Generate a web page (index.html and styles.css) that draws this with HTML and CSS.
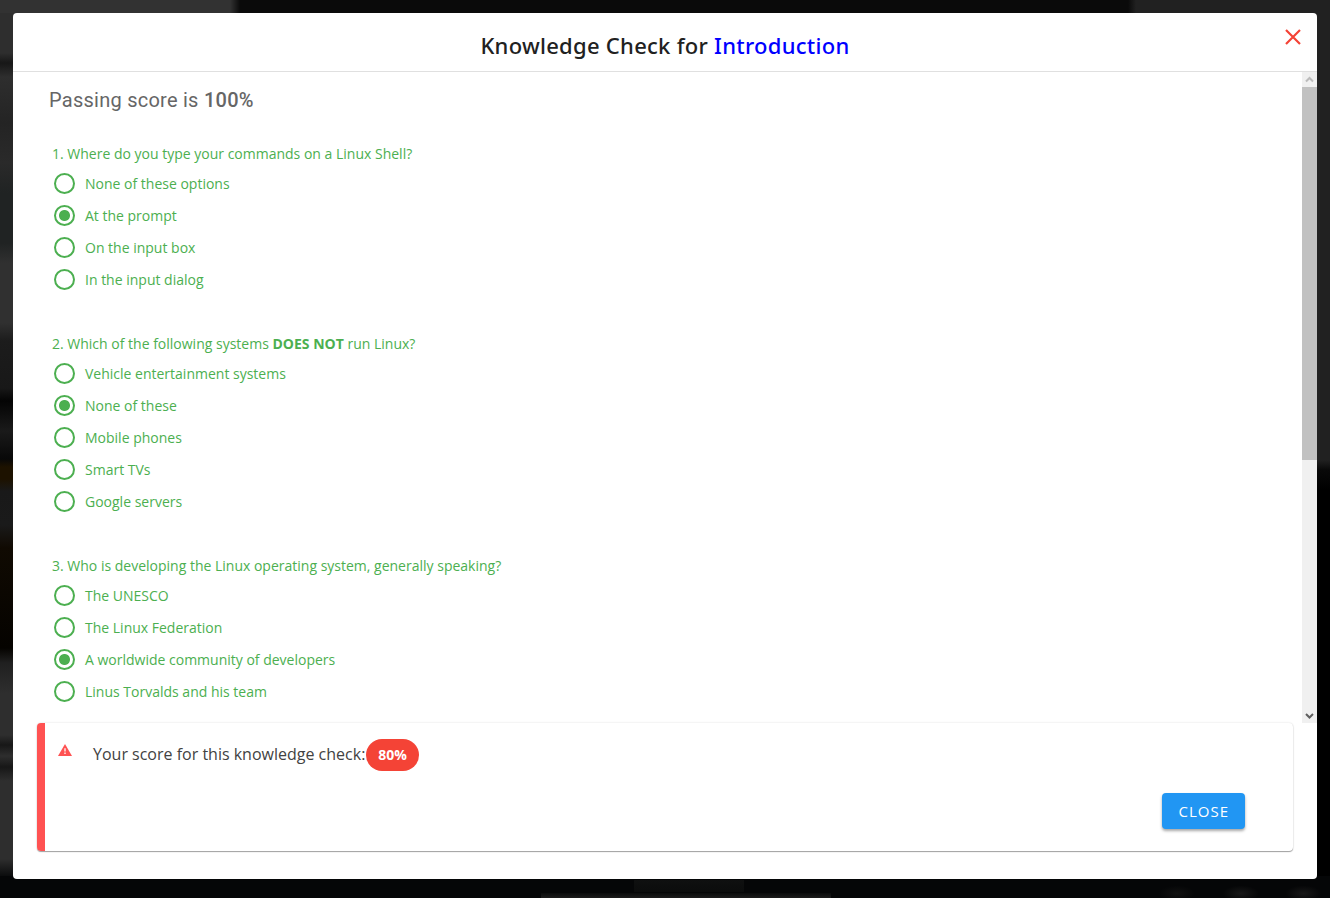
FILE: index.html
```html
<!DOCTYPE html>
<html lang="en">
<head>
<meta charset="utf-8">
<title>Knowledge Check</title>
<link rel="stylesheet" href="styles.css">
</head>
<body>
<main class="dialog" role="dialog" aria-labelledby="dialog-title">
  <header class="dialog-header">
    <h1 class="dialog-title" id="dialog-title">Knowledge Check for <span class="topic">Introduction</span></h1>
    <button class="dismiss" type="button" aria-label="Dismiss">
      <svg viewBox="0 0 16 16" width="16" height="16"><path d="M1 1 15 15M15 1 1 15" fill="none" stroke="currentColor" stroke-width="2.2"/></svg>
    </button>
  </header>
  <div class="dialog-body">
    <form class="quiz">
      <h2 class="passing">Passing score is <strong>100%</strong></h2>
      <fieldset class="question">
        <legend>1. Where do you type your commands on a Linux Shell?</legend>
        <label class="option"><input type="radio" name="q1">None of these options</label>
        <label class="option"><input type="radio" name="q1" checked>At the prompt</label>
        <label class="option"><input type="radio" name="q1">On the input box</label>
        <label class="option"><input type="radio" name="q1">In the input dialog</label>
      </fieldset>
      <fieldset class="question">
        <legend>2. Which of the following systems <b>DOES NOT</b> run Linux?</legend>
        <label class="option"><input type="radio" name="q2">Vehicle entertainment systems</label>
        <label class="option"><input type="radio" name="q2" checked>None of these</label>
        <label class="option"><input type="radio" name="q2">Mobile phones</label>
        <label class="option"><input type="radio" name="q2">Smart TVs</label>
        <label class="option"><input type="radio" name="q2">Google servers</label>
      </fieldset>
      <fieldset class="question">
        <legend>3. Who is developing the Linux operating system, generally speaking?</legend>
        <label class="option"><input type="radio" name="q3">The UNESCO</label>
        <label class="option"><input type="radio" name="q3">The Linux Federation</label>
        <label class="option"><input type="radio" name="q3" checked>A worldwide community of developers</label>
        <label class="option"><input type="radio" name="q3">Linus Torvalds and his team</label>
      </fieldset>
    </form>
    <div class="scrollbar" aria-hidden="true">
      <svg class="arrow arrow-up" viewBox="0 0 15 15"><path d="M4 9.5 7.5 6 11 9.5" fill="none" stroke="currentColor" stroke-width="2"/></svg>
      <div class="track"><div class="thumb"></div></div>
      <svg class="arrow arrow-down" viewBox="0 0 15 15"><path d="M4 6 7.5 9.5 11 6" fill="none" stroke="currentColor" stroke-width="2"/></svg>
    </div>
  </div>
  <section class="result">
    <div class="result-row">
      <svg class="warning" viewBox="0 0 14 12" width="14" height="12"><path d="M7 0 14 12H0Z" fill="currentColor"/><path d="M7 4.2V7.6M7 8.6V10" stroke="#fff" stroke-width="1.3"/></svg>
      <p class="score-text">Your score for this knowledge check:</p>
      <span class="score">80%</span>
    </div>
    <button class="close" type="button">CLOSE</button>
  </section>
</main>
</body>
</html>
```
FILE: styles.css
```css
* { box-sizing: border-box; }

body {
  margin: 0;
  height: 100vh;
  padding: 13px 13px 19px;
  display: flex;
  font-family: "Open Sans", "Noto Sans", sans-serif;
  background:
    linear-gradient(#0a0b0b, #1c1c1c) 52% 100% / 290px 5px no-repeat,
    linear-gradient(#0f1010, #0b0c0c) 52% calc(100% - 6px) / 110px 12px no-repeat,
    radial-gradient(ellipse 18px 8px at 88.5% 99.5%, #111, transparent) no-repeat,
    radial-gradient(ellipse 18px 8px at 93.3% 99.5%, #181818, transparent) no-repeat,
    radial-gradient(ellipse 18px 8px at 98% 99.5%, #181818, transparent) no-repeat,
    linear-gradient(#050607, #050607) 0 100% / 100% 22px no-repeat,
    linear-gradient(#2e2e2e 0, #2e2e2e 40px, #171717 50px, #2e2e2e 64px, #242424 110px, #2a2a2a 150px, #202323 180px, #202323 230px, #303030 250px, #303030 310px, #1c1c1c 328px, #181818 375px, #040404 388px, #1a1a1a 418px, #080808 446px, #1d1200 454px, #1d1200 466px, #191919 478px, #1a1a1a 512px, #100a02 535px, #050300 635px, #202020 650px, #2e2e2e 680px, #2e2e2e 722px, #171717 732px, #2e2e2e 743px, #171717 754px, #2e2e2e 768px, #2e2e2e 846px, #050607 866px) 0 13px / 13px 100% no-repeat,
    linear-gradient(#212121 0, #212121 460px, #090909 470px, #000 490px) 100% 0 / 13px 100% no-repeat,
    linear-gradient(90deg, #323232 0, #323232 230px, #0a0a0a 240px, #0a0a0a 1128px, #212121 1136px);
}

.dialog {
  flex: 1;
  min-width: 0;
  display: flex;
  flex-direction: column;
  background: #fff;
  border-radius: 4px;
  overflow: hidden;
}

.dialog-header {
  display: grid;
  grid-template-columns: 1fr auto 1fr;
  height: 59px;
  padding: 0 16px;
  border-bottom: 1px solid #e0e0e0;
  flex-shrink: 0;
}

.dialog-title {
  grid-column: 2;
  margin: 0;
  padding-top: 16px;
  font-family: "Noto Sans", sans-serif;
  font-size: 22px;
  line-height: 32px;
  font-weight: 500;
  letter-spacing: 0.0125em;
  color: #212121;
}

.topic { color: #00f; }

button {
  border: 0;
  font: inherit;
  cursor: pointer;
}

.dismiss {
  justify-self: end;
  align-self: start;
  margin-top: 16px;
  padding: 0;
  background: none;
  color: #f44336;
}

.dismiss svg { display: block; }

.dialog-body {
  flex: 1;
  min-height: 0;
  display: flex;
}

.quiz {
  flex: 1;
  overflow-y: auto;
  scrollbar-width: none;
  padding: 12px 36px 0;
}

.passing {
  margin: 0 0 24px;
  font: 400 20px/32px Roboto, sans-serif;
  letter-spacing: 0.0125em;
  color: #666;
}

.passing strong { font-weight: 500; }

.question {
  margin: 0 0 34px;
  padding: 0 3px;
  border: 0;
  min-width: 0;
  color: #4caf50;
  font-size: 14px;
}

.question:last-child { margin-bottom: 0; }

.question legend {
  padding: 0;
  line-height: 28px;
}

.option {
  display: flex;
  align-items: center;
  gap: 10px;
  height: 32px;
  padding: 0 0 1px 2px;
}

.option input {
  appearance: none;
  width: 21px;
  height: 21px;
  margin: 0;
  border: 2px solid #4caf50;
  border-radius: 50%;
}

.option input:checked {
  background: radial-gradient(circle, #4caf50 5px, transparent 6px);
}

.scrollbar {
  width: 15px;
  display: flex;
  flex-direction: column;
  background: #f0f0f0;
}

.arrow {
  width: 15px;
  height: 15px;
}

.arrow-up { color: #bbb; }
.arrow-down { color: #606060; }
.track { flex: 1; }

.thumb {
  height: 60%;
  background: #c1c1c1;
}

.result {
  flex-shrink: 0;
  display: flex;
  flex-direction: column;
  margin: 0 24px 28px;
  padding: 16px 48px 22px 12px;
  border-left: 8px solid #ff5252;
  border-radius: 4px;
  box-shadow: 0 1px 1px rgba(0, 0, 0, 0.35), 0 0 2px rgba(0, 0, 0, 0.15);
}

.result-row {
  display: flex;
  align-items: center;
}

.warning {
  color: #ff5252;
  margin: 0 21px 10px 1px;
}

.score-text {
  margin: 0 1px 2px 0;
  font-size: 16px;
  line-height: 28px;
  color: #424242;
}

.score {
  padding: 0 12px;
  border-radius: 16px;
  background: #f44336;
  color: #fff;
  font-size: 14px;
  font-weight: 700;
  line-height: 32px;
}

.close {
  align-self: flex-end;
  height: 36px;
  margin-top: 22px;
  padding: 0 16px;
  border-radius: 4px;
  background: #2196f3;
  color: #fff;
  font-size: 15px;
  font-weight: 500;
  letter-spacing: 1px;
  box-shadow: 0 2px 3px rgba(0, 0, 0, 0.35);
}
```
